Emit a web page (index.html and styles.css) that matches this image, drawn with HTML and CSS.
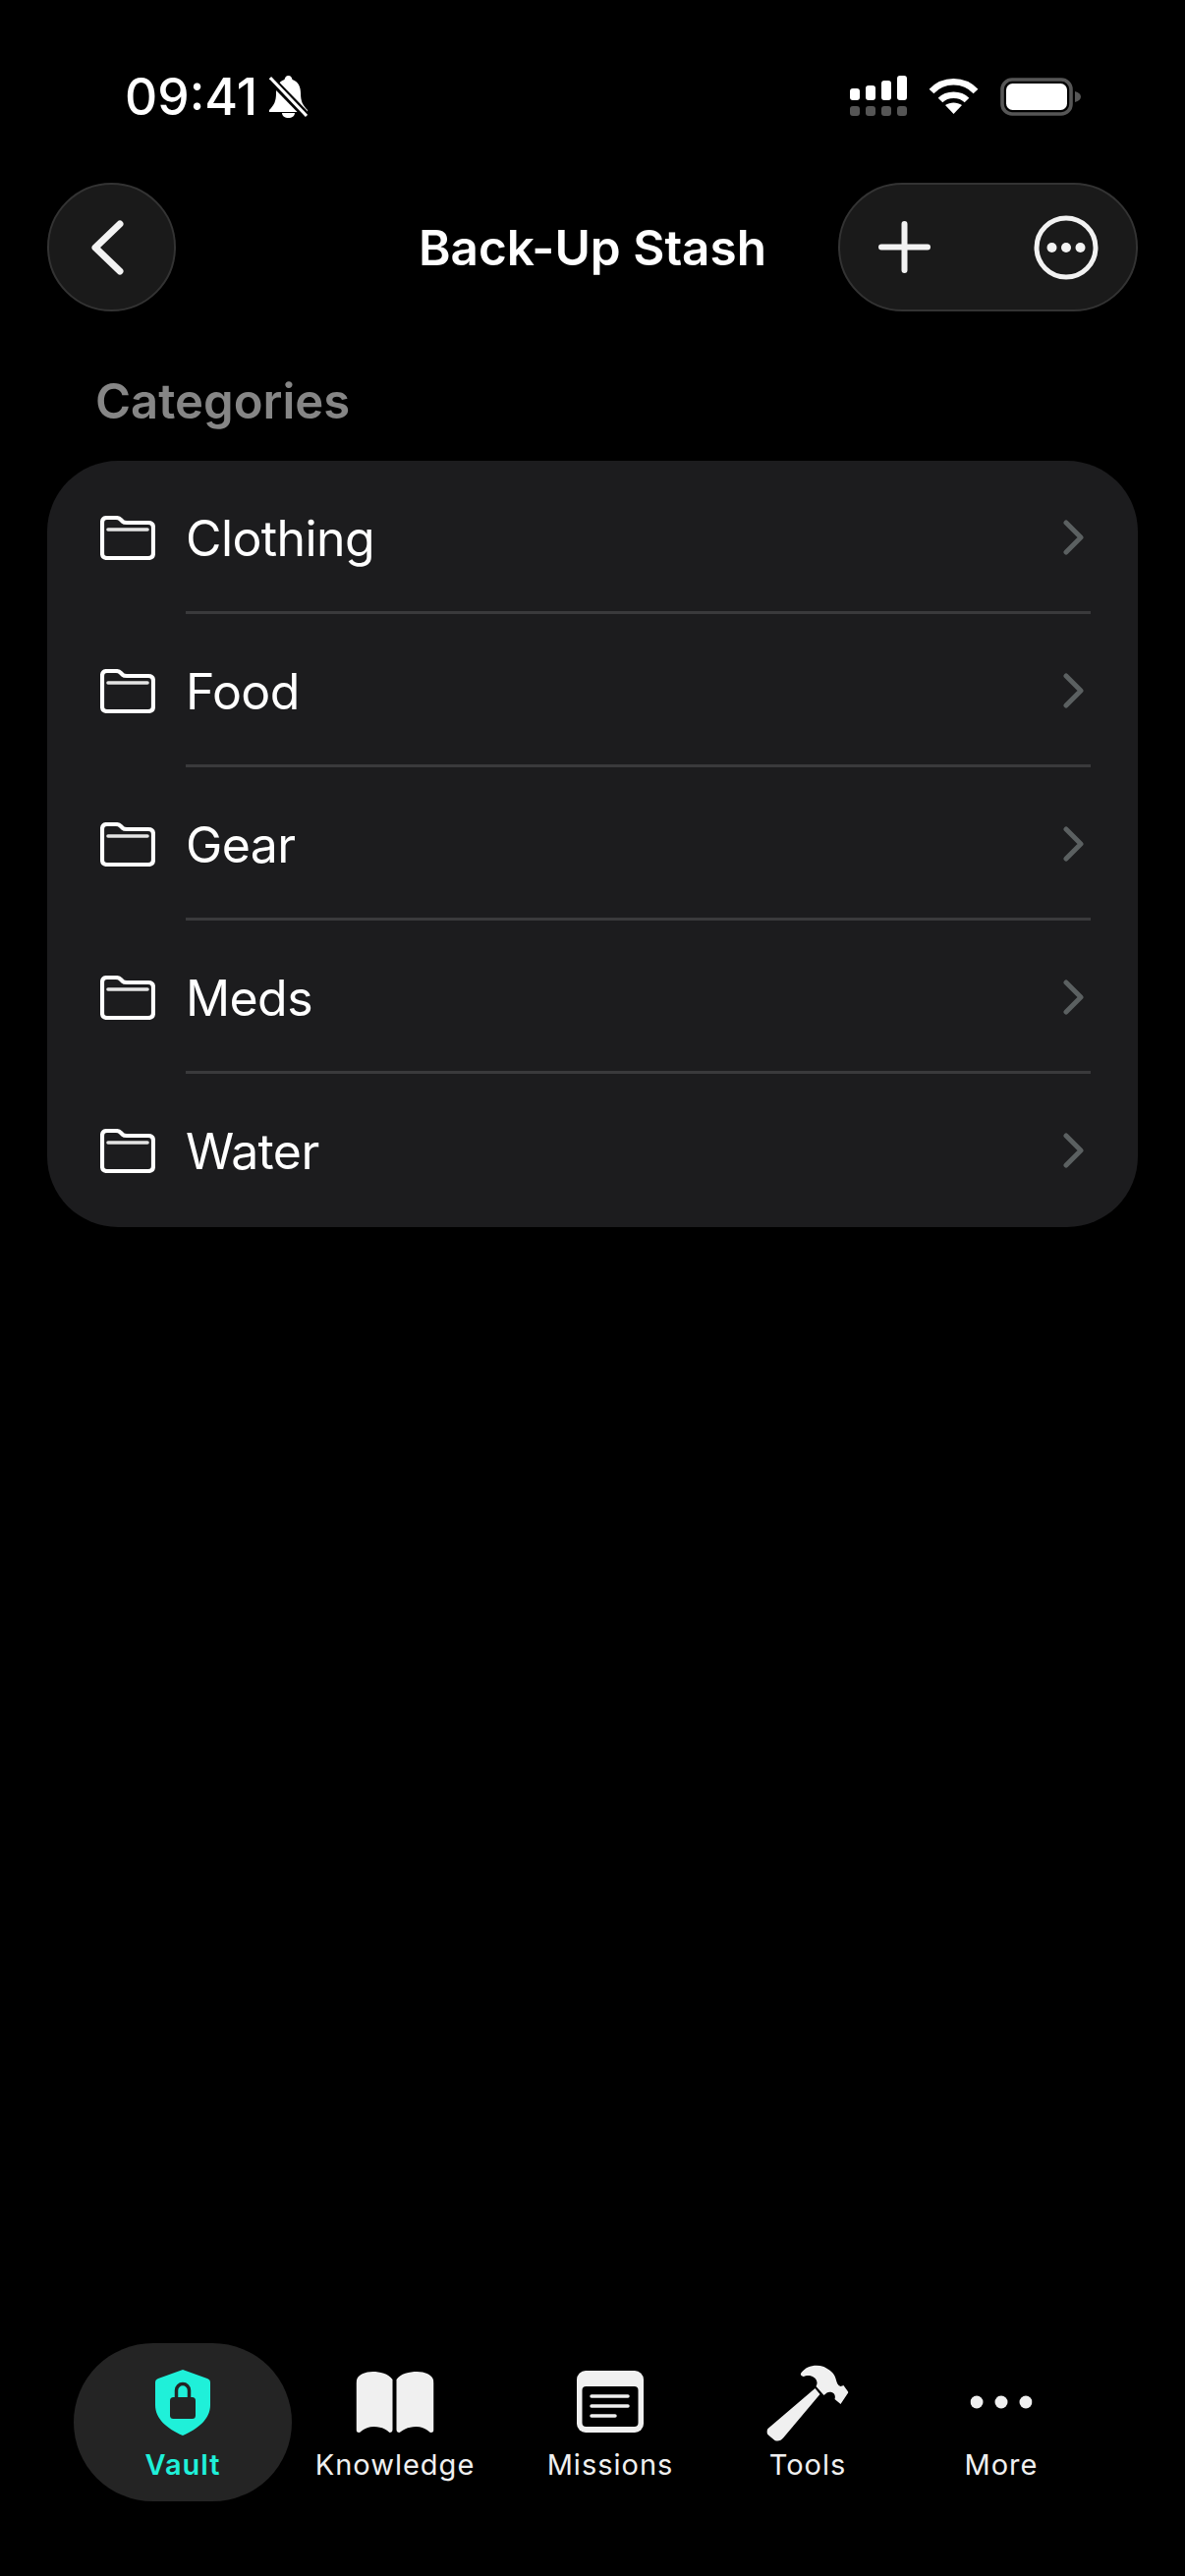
FILE: index.html
```html
<!DOCTYPE html>
<html lang="en">

<head>
  <meta charset="UTF-8">
  <meta name="viewport" content="width=device-width, initial-scale=1.0">
  <title>Back-Up Stash</title>
  <link rel="stylesheet" href="styles.css">
</head>

<body>
  <svg class="defs" width="0" height="0">
    <symbol id="folder" viewBox="0 0 56 45">
      <path d="M2 7 Q2 2 7 2 H16 Q19 2 21 4 L23 6 Q24 7 27 7 H49 Q54 7 54 12 V38 Q54 43 49 43 H7 Q2 43 2 38 Z" fill="none" stroke="#fff" stroke-width="4.2" />
      <path d="M8 14 H48" fill="none" stroke="#e4e4e4" stroke-width="3.6" stroke-linecap="round" />
    </symbol>
    <symbol id="chevron" viewBox="0 0 21 36">
      <path d="M3 3 L18 18 L3 33" fill="none" stroke="#5b6061" stroke-width="5" stroke-linecap="round" stroke-linejoin="round" />
    </symbol>
  </svg>

  <div class="page">
    <!-- status bar -->
    <div class="status">
      <div class="status-left">
        <span class="time">09:41</span>
        <svg class="bell" viewBox="0 0 39 43">
          <path d="M19.5 0 C22 0 23 2 23.5 4 C30 6 32 12 32 18 C32 26 34 30 39 35 V37 H0 V35 C5 30 7 26 7 18 C7 12 9 6 15.500 4 C16 2 17 0 19.500 0 Z" fill="#fff" />
          <path d="M13 38 H26 C26 41 23 43 19.500 43 C16 43 13 41 13 38 Z" fill="#fff" />
          <path d="M1 3 L38 41" stroke="#000" stroke-width="8" />
          <path d="M1 2 L38 41" stroke="#fff" stroke-width="3" />
        </svg>
      </div>
      <div class="status-right">
        <svg class="signal" viewBox="0 0 58 41">
          <rect x="0" y="13" width="10" height="12" rx="3" fill="#fff" />
          <rect x="16" y="10" width="10" height="15" rx="3" fill="#fff" />
          <rect x="32" y="5" width="10" height="20" rx="3" fill="#fff" />
          <rect x="48" y="0" width="10" height="25" rx="3" fill="#fff" />
          <rect x="0" y="31" width="10" height="10" rx="3" fill="#555" />
          <rect x="16" y="31" width="10" height="10" rx="3" fill="#555" />
          <rect x="32" y="31" width="10" height="10" rx="3" fill="#555" />
          <rect x="48" y="31" width="10" height="10" rx="3" fill="#555" />
        </svg>
        <svg class="wifi" viewBox="0 0 51 37">
          <path d="M3 14 C15 1 36 1 48 14" fill="none" stroke="#fff" stroke-width="6.500" />
          <path d="M12 23 C19 16 32 16 39 23" fill="none" stroke="#fff" stroke-width="6.500" />
          <path d="M25.500 37 L17 28 C22 24.500 29 24.500 34 28 Z" fill="#fff" />
        </svg>
        <svg class="battery" viewBox="0 0 82 39">
          <rect x="2" y="2" width="70" height="35" rx="10" fill="none" stroke="#565656" stroke-width="3.600" />
          <rect x="6" y="6" width="62" height="27" rx="6.500" fill="#fff" />
          <path d="M76 14 C80 15 82 17 82 19.500 C82 22 80 24 76 25 Z" fill="#565656" />
        </svg>
      </div>
    </div>

    <!-- top bar -->
    <header class="topbar">
      <button class="glass round">
        <svg class="back" viewBox="0 0 33 56">
          <path d="M29 4 L4 28 L29 52" fill="none" stroke="#f2f2f2" stroke-width="7" stroke-linecap="round" stroke-linejoin="round" />
        </svg>
      </button>
      <h1>Back-Up Stash</h1>
      <div class="glass pill">
        <svg class="plus" viewBox="0 0 53 53">
          <path d="M26.500 3 V50 M3 26.500 H50" fill="none" stroke="#f2f2f2" stroke-width="6" stroke-linecap="round" />
        </svg>
        <svg class="more-circle" viewBox="0 0 66 66">
          <circle cx="33" cy="33" r="30" fill="none" stroke="#f2f2f2" stroke-width="5" />
          <circle cx="18.500" cy="33" r="5" fill="#f2f2f2" />
          <circle cx="33" cy="33" r="5" fill="#f2f2f2" />
          <circle cx="47.500" cy="33" r="5" fill="#f2f2f2" />
        </svg>
      </div>
    </header>

    <h2 class="section-title">Categories</h2>

    <ul class="list">
      <li class="row">
        <svg class="folder"><use href="#folder" /></svg>
        <div class="row-body"><span>Clothing</span><svg class="chev"><use href="#chevron" /></svg></div>
      </li>
      <li class="row">
        <svg class="folder"><use href="#folder" /></svg>
        <div class="row-body"><span>Food</span><svg class="chev"><use href="#chevron" /></svg></div>
      </li>
      <li class="row">
        <svg class="folder"><use href="#folder" /></svg>
        <div class="row-body"><span>Gear</span><svg class="chev"><use href="#chevron" /></svg></div>
      </li>
      <li class="row">
        <svg class="folder"><use href="#folder" /></svg>
        <div class="row-body"><span>Meds</span><svg class="chev"><use href="#chevron" /></svg></div>
      </li>
      <li class="row">
        <svg class="folder"><use href="#folder" /></svg>
        <div class="row-body"><span>Water</span><svg class="chev"><use href="#chevron" /></svg></div>
      </li>
    </ul>

    <!-- tabs -->
    <nav class="tabs">
      <a class="tab active">
        <svg class="ico-shield" viewBox="0 0 56 67">
          <path d="M28 0 L53 9 Q56 10 56 13 V36 C56 50 44 60 28 67 C12 60 0 50 0 36 V13 Q0 10 3 9 Z" fill="#1ff0d9" />
          <path d="M21.500 29 V21 a6.500 6.500 0 0 1 13 0 V29" fill="none" stroke="#242424" stroke-width="3.500" />
          <rect x="15" y="28" width="26" height="22" rx="3.500" fill="#242424" />
        </svg>
        <span>Vault</span>
      </a>
      <a class="tab">
        <svg class="ico-book" viewBox="0 0 79 62">
          <path d="M37 8 C33 2 24 0 17 0 C9 0 3 3 1 7 Q0 9 0 12 V59 Q0 62 3 62 C5 62 8 56 18 56 C27 56 32 60 34 62 Q37 62 37 59 Z" fill="#f0f0f0" />
          <path d="M41 8 C45 2 54 0 62 0 C70 0 76 3 78 7 Q79 9 79 12 V59 Q79 62 76 62 C74 62 71 56 61 56 C52 56 47 60 44 62 Q41 62 41 59 Z" fill="#f0f0f0" />
        </svg>
        <span>Knowledge</span>
      </a>
      <a class="tab">
        <svg class="ico-missions" viewBox="0 0 68 63">
          <rect width="68" height="63" rx="9" fill="#f0f0f0" />
          <rect x="5.500" y="16" width="57" height="41" rx="4" fill="#000" />
          <path d="M15 26 H52 M15 36 H52 M15 46 H39" stroke="#f0f0f0" stroke-width="3.500" stroke-linecap="round" />
        </svg>
        <span>Missions</span>
      </a>
      <a class="tab">
        <svg class="ico-hammer" viewBox="0 0 83 78">
          <path d="M1 65 L49 24 L54 30 L17 74 Q13 79 8 77 L2 72 Q-2 69 1 65 Z" fill="#f0f0f0" />
          <path d="M35 8 C40 1 50 -1 58 2 C64 5 69 9 70 14 C71 18 72 21 75 22 L78 21 L83 28 L75 40 L69 35 C70 32 69 29 66 28 C63 27 61 28 58 31 L50 22 C52 19 51 15 48 13 C44 10 40 11 37 12 Q33 11 35 8 Z" fill="#f0f0f0" />
        </svg>
        <span>Tools</span>
      </a>
      <a class="tab">
        <svg class="ico-dots" viewBox="0 0 63 14">
          <circle cx="6.500" cy="7" r="6.500" fill="#f0f0f0" />
          <circle cx="31.500" cy="7" r="6.500" fill="#f0f0f0" />
          <circle cx="56.500" cy="7" r="6.500" fill="#f0f0f0" />
        </svg>
        <span>More</span>
      </a>
    </nav>
  </div>
</body>

</html>
```

FILE: styles.css
```css
* {
  box-sizing: border-box;
}

body {
  margin: 0;
  background: #000;
  color: #fff;
  font-family: Inter, "Liberation Sans", sans-serif;
}

.defs {
  display: block;
}

.page {
  display: flex;
  flex-direction: column;
  height: 2622px;
}

/* status bar */
.status {
  display: flex;
  justify-content: space-between;
  padding: 77px 106px 0 127px;
  height: 186px;
}

.status-left {
  display: flex;
  align-items: flex-start;
  gap: 12px;
}

.time {
  font-size: 51.500px;
  font-weight: 500;
  line-height: 43px;
}

.bell {
  width: 39px;
  height: 43px;
}

.status-right {
  display: flex;
  align-items: flex-start;
}

.signal {
  width: 58px;
  height: 41px;
  margin-right: 22px;
}

.wifi {
  width: 51px;
  height: 37px;
  margin-top: 2px;
  margin-right: 22px;
}

.battery {
  width: 82px;
  height: 39px;
  margin-top: 2px;
}

/* top bar */
.topbar {
  display: grid;
  grid-template-columns: 305px 1fr 305px;
  align-items: center;
  padding: 0 48px;
  height: 131px;
}

.topbar h1 {
  margin: 0;
  text-align: center;
  font-size: 49.500px;
  font-weight: 600;
}

.glass {
  background: #1a1a1a;
  border: 2px solid #333;
  height: 131px;
}

.round {
  width: 131px;
  border-radius: 50%;
  padding: 0 0 0 43px;
  display: flex;
  align-items: center;
}

.back {
  width: 33px;
  height: 56px;
}

.pill {
  border-radius: 66px;
  display: flex;
  align-items: center;
  padding: 0 38px 0 39px;
  justify-content: space-between;
}

.plus {
  width: 53px;
  height: 53px;
}

.more-circle {
  width: 66px;
  height: 66px;
}

/* list */
.section-title {
  margin: 64px 0 0 97px;
  height: 88px;
  font-size: 49px;
  line-height: 56px;
  font-weight: 600;
  color: #868686;
}

.list {
  list-style: none;
  margin: 0 48px;
  padding: 0;
  background: #1c1c1e;
  border-radius: 72px;
}

.row {
  display: flex;
  align-items: center;
  padding-left: 54px;
  height: 156px;
}

.folder {
  width: 56px;
  height: 45px;
  flex: none;
  margin-right: 31px;
}

.row-body {
  flex: 1;
  height: 100%;
  margin-right: 48px;
  padding: 3px 7px 0 0;
  display: flex;
  align-items: center;
  justify-content: space-between;
  font-size: 50px;
  letter-spacing: -0.600px;
  border-bottom: 3px solid #3a3a3c;
}

.row-body span {
  padding-top: 2px;
}

.row:last-child .row-body {
  padding-top: 0;
  border-bottom: 0;
}

.chev {
  width: 21px;
  height: 36px;
}

/* tab bar */
.tabs {
  margin-top: auto;
  margin-bottom: 76px;
  margin-left: 75px;
  display: grid;
  grid-template-columns: 222px 210px 228px 174px 220px;
  height: 161px;
}

.tab {
  position: relative;
  display: block;
  text-align: center;
  color: #f0f0f0;
}

.tab span {
  position: absolute;
  left: 0;
  right: 0;
  top: 104px;
  font-size: 29px;
  line-height: 40px;
  letter-spacing: 1px;
}

.tab svg {
  position: absolute;
  left: 50%;
  transform: translateX(-50%);
}

.active {
  background: #242424;
  border-radius: 81px;
  color: #1ff0d9;
  font-weight: 600;
}

.ico-shield {
  top: 27px;
  width: 56px;
  height: 67px;
}

.ico-book {
  top: 29px;
  width: 79px;
  height: 62px;
}

.ico-missions {
  top: 28px;
  width: 68px;
  height: 63px;
}

.ico-hammer {
  top: 22px;
  width: 83px;
  height: 78px;
}

.ico-dots {
  top: 53px;
  width: 63px;
  height: 14px;
}
```
